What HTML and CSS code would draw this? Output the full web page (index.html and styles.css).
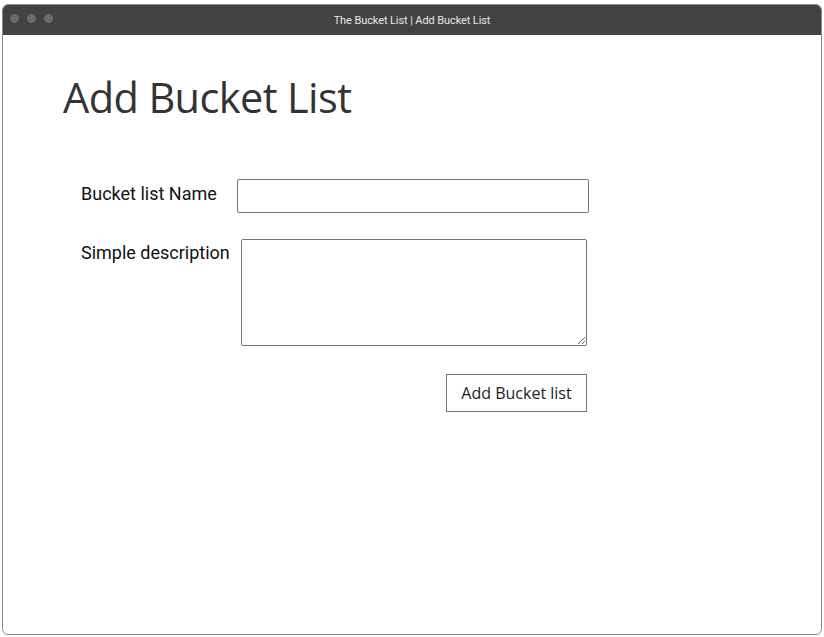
FILE: index.html
```html
<!DOCTYPE html>
<html lang="en">
<head>
<meta charset="utf-8">
<title>The Bucket List | Add Bucket List</title>
<link rel="stylesheet" href="styles.css">
</head>
<body>
<div class="window">
  <div class="titlebar">
    <div class="dots"><span class="dot"></span><span class="dot"></span><span class="dot"></span></div>
    <div class="title">The Bucket List | Add Bucket List</div>
  </div>
  <div class="content">
    <h1 class="heading">Add Bucket List</h1>
    <form class="form">
      <div class="row row-name">
        <label class="label" for="name">Bucket list Name</label>
        <input class="input" id="name" type="text">
      </div>
      <div class="row row-desc">
        <label class="label" for="desc">Simple description</label>
        <textarea class="textarea" id="desc"></textarea>
      </div>
      <div class="actions">
        <button class="button" type="button">Add Bucket list</button>
      </div>
    </form>
  </div>
</div>
</body>
</html>
```

FILE: styles.css
```css
html, body {
  margin: 0;
  padding: 0;
  background: #ffffff;
}
body {
  padding: 4px 2px 2px 2px;
  height: 637px;
  box-sizing: border-box;
}
.window {
  height: 100%;
  box-sizing: border-box;
  border: 1px solid #8a8a8a;
  border-radius: 6px;
  overflow: hidden;
  display: flex;
  flex-direction: column;
  background: #fff;
}
.titlebar {
  height: 30px;
  background: #424242;
  position: relative;
  display: flex;
  align-items: center;
  justify-content: center;
}
.dots {
  position: absolute;
  left: 7px;
  top: 9px;
  display: flex;
  gap: 8px;
}
.dot {
  width: 9px;
  height: 9px;
  border-radius: 50%;
  background: #6a6a6a;
}
.title {
  font-family: Roboto, "Liberation Sans", sans-serif;
  font-size: 11px;
  color: #e8e8e8;
  letter-spacing: -0.1px;
}
.content {
  padding: 0 0 0 60px;
}
.heading {
  font-family: "Open Sans", "Noto Sans", sans-serif;
  font-weight: 400;
  font-size: 41.5px;
  color: #333;
  margin: 34px 0 0 0;
  line-height: 56px;
  letter-spacing: -0.6px;
}
.form {
  margin: 0;
  padding: 0 0 0 18px;
  font-family: Roboto, "Liberation Sans", sans-serif;
  font-size: 18px;
  color: #111;
}
.row {
  display: flex;
  align-items: flex-start;
}
.row-name {
  margin-top: 54px;
  gap: 20px;
}
.row-desc {
  margin-top: 26px;
  gap: 11px;
}
.label {
  line-height: 22px;
  padding-top: 4px;
}
.row-desc .label {
  padding-top: 3px;
}
.input {
  width: 352px;
  height: 34px;
  box-sizing: border-box;
  border: 1px solid #767676;
  border-radius: 2px;
  margin: 0;
  padding: 2px 4px;
  font-size: 16px;
}
.textarea {
  width: 346px;
  height: 107px;
  box-sizing: border-box;
  border: 1px solid #767676;
  border-radius: 2px;
  margin: 0;
  padding: 2px 4px;
  resize: both;
}
.actions {
  display: flex;
  width: 506px;
  justify-content: flex-end;
  margin-top: 28px;
}
.button {
  font-family: "Open Sans", "Noto Sans", sans-serif;
  font-size: 16px;
  color: #222;
  background: #fff;
  border: 1px solid #767676;
  border-radius: 0;
  height: 38px;
  width: 141px;
  padding: 0;
}
```
